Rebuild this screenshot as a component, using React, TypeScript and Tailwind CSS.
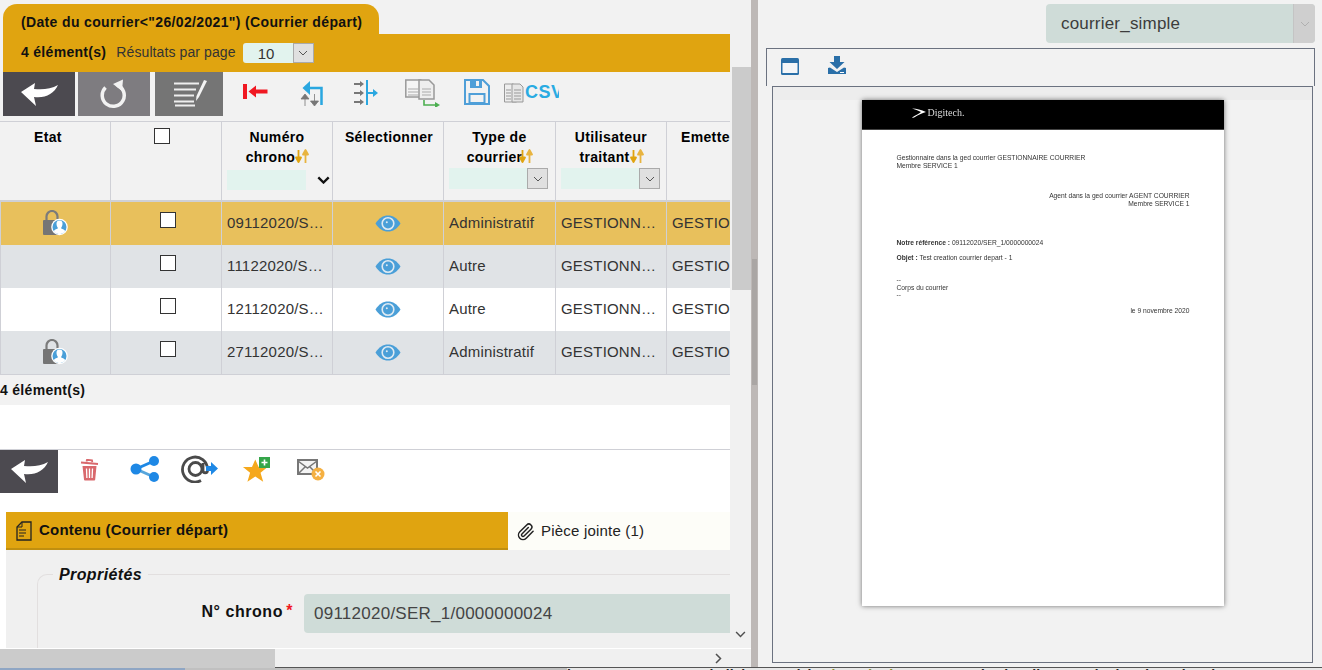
import React from "react";

const SortIcon = ({ className = "" }: { className?: string }) => (
  <svg width="14" height="15" viewBox="0 0 14 15" className={`inline-block align-[-2px] ${className}`}>
    <path d="M3.500 1v9M1 8.500l2.500 4.500L6 8.500z" fill="#e0a410" stroke="#e0a410" strokeWidth="1.800" strokeLinejoin="round" />
    <path d="M10.500 14V4M8 5.500 10.500 1 13 5.500z" fill="#e8b440" stroke="#e8b440" strokeWidth="1.800" strokeLinejoin="round" />
  </svg>
);

const Chevron = ({ color = "#555", w = 10, sw = 1 }: { color?: string; w?: number; sw?: number }) => (
  <svg width={w} height={w * 0.6} viewBox="0 0 10 6">
    <path d="M1 1l4 4 4-4" fill="none" stroke={color} strokeWidth={sw} />
  </svg>
);

const BackArrow = () => (
  <svg width="37" height="23" viewBox="0 0 37 23">
    <path d="M0 9 14 0 13 6C22 7 30 6 37 2 33 11 24 15.500 13 14L15 23Z" fill="#fff" />
  </svg>
);

const Lock = () => (
  <svg width="25" height="26" viewBox="0 0 25 26">
    <path d="M3.500 12V6.500a5.500 5.500 0 0 1 11 0V12" fill="none" stroke="#7b7b7b" strokeWidth="2.200" />
    <rect x="0" y="10" width="18" height="15" rx="1" fill="#757575" />
    <circle cx="16.500" cy="17" r="8.300" fill="#fff" />
    <circle cx="16.500" cy="17" r="7" fill="#4a9fd8" />
    <path d="M13.500 13.500a3 3 0 0 1 6 0c0 2-.7 3.500-1.300 4.200v.8c1.500.5 3.500 1 4 2.700a7 7 0 0 1-11.400 0c.5-1.700 2.500-2.200 4-2.700v-.8c-.6-.7-1.300-2.200-1.300-4.200z" fill="#fff" />
  </svg>
);

const Eye = () => (
  <svg width="26" height="17" viewBox="0 0 26 17">
    <path d="M0.500 8.500C4 3 8 .5 13 .5s9 2.500 12.500 8C22 14 18 16.500 13 16.500S4 14 .5 8.500z" fill="#4a9fd8" />
    <circle cx="13" cy="8.500" r="5.800" fill="none" stroke="#dfeaf2" strokeWidth="1.600" />
    <circle cx="13" cy="8.500" r="2.800" fill="#4a9fd8" />
    <circle cx="11.800" cy="7.300" r="1" fill="#dfeaf2" />
  </svg>
);

const Check = () => <div className="w-[16px] h-[16px] bg-white border border-[#333]" />;

const rows = [
  { bg: "bg-[#e8c05c]", lock: true, chrono: "09112020/S…", type: "Administratif" },
  { bg: "bg-[#e0e3e6]", lock: false, chrono: "11122020/S…", type: "Autre" },
  { bg: "bg-white", lock: false, chrono: "12112020/S…", type: "Autre" },
  { bg: "bg-[#e0e3e6]", lock: true, chrono: "27112020/S…", type: "Administratif" },
];

const gridCols = "grid grid-cols-[110px_111px_111px_111px_112px_111px_64px]";
const rowCols = "grid grid-cols-[109px_111px_111px_111px_112px_111px_64px]";
const cellBorder = "border-l border-[#cfd0d6]";

const FilterSelect = () => (
  <div className="flex h-[21px] mt-[1px] ml-[5px]">
    <div className="w-[78px] bg-[#e2f3ee]" />
    <div className="w-[21px] h-[21px] bg-[#e0e0e0] border border-[#aaa] flex items-center justify-center">
      <Chevron />
    </div>
  </div>
);

export default function App() {
  return (
    <div className="w-[1322px] h-[670px] overflow-hidden bg-[#f2f2f2] font-['Liberation_Sans',Arial,sans-serif] text-black">
      <div className="flex h-[667px]">
        {/* Left pane */}
        <div className="w-[751px] flex flex-col">
          <div className="flex h-[648px]">
            <div className="w-[730px] h-[648px] overflow-hidden flex flex-col">
              {/* Title tab */}
              <div className="pt-[4px] pl-[3px] shrink-0">
                <div className="w-[376px] h-[30px] bg-[#e0a410] rounded-t-[14px] pl-[18px] pt-[9px] text-[14px] leading-[18px] font-bold tracking-[0.35px] text-[#111] whitespace-nowrap">
                  (Date du courrier&lt;"26/02/2021") (Courrier départ)
                </div>
              </div>
              <div className="ml-[3px] h-[38px] shrink-0 bg-[#e0a410] flex items-center pl-[18px] pb-[1px]">
                <span className="text-[14px] font-bold tracking-[0.3px] text-[#111]">4 élément(s)</span>
                <span className="ml-[10px] text-[14px] text-[#333] tracking-[0.1px]">Résultats par page</span>
                <div className="ml-[7px] flex h-[20px] mt-[1px]">
                  <div className="w-[50px] bg-[#e2f3ee] rounded-l-[3px] pl-[15px] text-[15px] leading-[22px] text-[#333]">10</div>
                  <div className="w-[21px] bg-[#e0e0e0] border border-[#aaa] flex items-center justify-center">
                    <Chevron />
                  </div>
                </div>
              </div>
              {/* Toolbar */}
              <div className="h-[44px] flex items-start shrink-0">
                <div className="ml-[3px] w-[72px] h-[44px] bg-[#4c4a50] flex items-center justify-center">
                  <BackArrow />
                </div>
                <div className="ml-[3px] w-[72px] h-[44px] bg-[#7e7c80] flex items-center justify-center">
                  <svg width="30" height="30" viewBox="0 0 30 30">
                    <path d="M6.500 8.500A11 11 0 1 0 18 6" fill="none" stroke="#f2f2f2" strokeWidth="3.500" />
                    <path d="M14 5 24 0.500 23 12Z" fill="#f2f2f2" />
                  </svg>
                </div>
                <div className="ml-[5px] w-[68px] h-[44px] bg-[#757575] flex items-center justify-center pl-[4px]">
                  <svg width="36" height="28" viewBox="0 0 36 28">
                    <path d="M1 3.500h25M1 9.500h22M1 15.500h20M1 21.500h20M2 25.500h20" fill="none" stroke="#eee" strokeWidth="2.200" />
                    <path d="M34 1 26 17l-3 4 .5-5L31 0z" fill="#f4f4f4" />
                  </svg>
                </div>
                <svg width="25" height="16" viewBox="0 0 25 16" className="ml-[20px] mt-[12px]">
                  <rect x="0" y="0" width="4" height="15" fill="#f01822" />
                  <path d="M5.500 7.500 13 1.500v4h11.500v4H13v4z" fill="#f01822" />
                </svg>
                <svg width="23" height="26" viewBox="0 0 23 26" className="ml-[32px] mt-[8px]">
                  <path d="M21.500 25V8H7" fill="none" stroke="#2aa7e0" strokeWidth="2.500" />
                  <path d="M10 1v14L2.500 8z" fill="#2aa7e0" />
                  <path d="M5 26V16M1 19l4-5 4 5z" fill="#777" stroke="#777" strokeWidth=".8" />
                  <path d="M14.500 14v10M10.500 21l4 5 4-5z" fill="#777" stroke="#777" strokeWidth=".8" />
                </svg>
                <svg width="24" height="26" viewBox="0 0 24 26" className="ml-[31px] mt-[8px]">
                  <path d="M0 4h7M0 13h7M0 22h7" stroke="#777" strokeWidth="2" />
                  <path d="M6 1l4 3-4 3zM6 10l4 3-4 3zM6 19l4 3-4 3z" fill="#777" />
                  <path d="M13 0v25" stroke="#2aa7e0" strokeWidth="2" />
                  <path d="M13 13h7" stroke="#2aa7e0" strokeWidth="2" />
                  <path d="M19 9l5 4-5 4z" fill="#2aa7e0" />
                </svg>
                <svg width="35" height="28" viewBox="0 0 35 28" className="ml-[27px] mt-[7px]">
                  <path d="M.8 1h15l5 4v13H.8z" fill="#f4f4f4" stroke="#999" strokeWidth="1.500" />
                  <path d="M14 1h10l5 5v14H14z" fill="#eee" stroke="#999" strokeWidth="1.500" />
                  <path d="M3 10h11M3 13h11M3 16h11M17 10h9M17 13h9M17 16h9" stroke="#aaa" strokeWidth="1" />
                  <path d="M19 21v5h12" fill="none" stroke="#4caf50" strokeWidth="1.600" />
                  <path d="M30 23l5 3-5 3z" fill="#4caf50" />
                </svg>
                <svg width="26" height="26" viewBox="0 0 26 26" className="ml-[24px] mt-[7px]">
                  <path d="M1 1h18l6 6v18H1z" fill="none" stroke="#4f9fd8" strokeWidth="2" />
                  <path d="M6 1h12v8H6z" fill="#4f9fd8" />
                  <rect x="12" y="2" width="3" height="5" fill="#f2f2f2" />
                  <rect x="5.500" y="15" width="15" height="9" fill="none" stroke="#4f9fd8" strokeWidth="2" />
                </svg>
                <div className="ml-[14px] mt-[10px] w-[55px] h-[21px] overflow-hidden flex items-center">
                  <svg width="20" height="20" viewBox="0 0 20 20" className="shrink-0">
                    <path d="M.5 1h9l3 3v15H.5z" fill="#eee" stroke="#999" />
                    <path d="M8 1h8l3 3v15H8z" fill="#e6e6e6" stroke="#999" />
                    <path d="M2 7h5M2 10h5M2 13h5M2 16h5M10 7h7M10 10h7M10 13h7M10 16h7" stroke="#999" />
                  </svg>
                  <span className="text-[18px] font-bold text-[#29abe2] leading-[21px] tracking-[0.5px] ml-[1px]">CSV</span>
                </div>
              </div>

              {/* Table */}
              <div className="mt-[5px] h-[253px] shrink-0 overflow-hidden border-t border-[#cfd0d6]">
                <div className={`${gridCols} w-[730px] h-[80px] border-b-2 border-[#cfd0d6] text-[14px] leading-[20px] font-bold tracking-[0.35px]`}>
                  <div className="pl-[34px] pt-[5px]">Etat</div>
                  <div className={`${cellBorder} pl-[43px] pt-[6px]`}>
                    <Check />
                  </div>
                  <div className={`${cellBorder} pt-[5px] text-center relative`}>
                    <div>Numéro</div>
                    <div className="pl-[1px]">chrono<SortIcon /></div>
                    <div className="flex items-center mt-[3px] ml-[5px]">
                      <div className="w-[79px] h-[20px] bg-[#e2f3ee]" />
                      <span className="ml-[11px]"><Chevron color="#111" w={13} sw={1.800} /></span>
                    </div>
                  </div>
                  <div className={`${cellBorder} pt-[5px] pl-[2px] text-center`}>Sélectionner</div>
                  <div className={`${cellBorder} pt-[5px] text-center`}>
                    <div>Type de</div>
                    <div className="pl-[1px]">courrier<SortIcon className="-ml-[3px]" /></div>
                    <FilterSelect />
                  </div>
                  <div className={`${cellBorder} pt-[5px] text-center`}>
                    <div>Utilisateur</div>
                    <div className="pl-[1px]">traitant<SortIcon /></div>
                    <FilterSelect />
                  </div>
                  <div className={`${cellBorder} pt-[5px] pl-[14px] whitespace-nowrap overflow-hidden`}>Emetteur</div>
                </div>
                {rows.map((r) => (
                  <div key={r.chrono} className={`${rowCols} w-[730px] h-[43px] ${r.bg} border-l border-[#cfd0d6] text-[15px] tracking-[0.2px] text-[#333]`}>
                    <div className="pl-[42px] pt-[8px]">{r.lock && <Lock />}</div>
                    <div className={`${cellBorder} pl-[49px] pt-[10px]`}>
                      <Check />
                    </div>
                    <div className={`${cellBorder} pl-[5px] flex items-center`}>{r.chrono}</div>
                    <div className={`${cellBorder} flex items-center justify-center`}>
                      <Eye />
                    </div>
                    <div className={`${cellBorder} pl-[5px] flex items-center`}>{r.type}</div>
                    <div className={`${cellBorder} pl-[5px] flex items-center`}>GESTIONN…</div>
                    <div className={`${cellBorder} pl-[5px] flex items-center overflow-hidden whitespace-nowrap`}>GESTIONN…</div>
                  </div>
                ))}
              </div>
              <div className="h-[31px] shrink-0 border-t border-[#cfd0d6] flex items-center text-[14px] font-bold tracking-[0.3px] text-[#111]">
                4 élément(s)
              </div>

              {/* Lower white area */}
              <div className="bg-white flex-1 flex flex-col pt-[44px]">
                <div className="h-[44px] border-t border-[#cfd0d6] flex items-start shrink-0">
                  <div className="w-[58px] h-[43px] bg-[#4c4a50] flex items-center justify-center">
                    <BackArrow />
                  </div>
                  <svg width="19" height="22" viewBox="0 0 19 22" className="ml-[22px] mt-[9px]">
                    <path d="M1 3.500 18 5M6.500 2.500 7 .8 12 1.300l.3 1.800" fill="none" stroke="#d9686c" strokeWidth="1.800" />
                    <path d="M2.500 7h14l-1.300 13.500a1 1 0 0 1-1 1H5a1 1 0 0 1-1-1z" fill="#d9686c" />
                    <path d="M6.500 9.500l.4 9.500M9.500 9.500V19M12.500 9.500l-.4 9.500" stroke="#fff" strokeWidth="1.300" />
                  </svg>
                  <svg width="30" height="26" viewBox="0 0 30 26" className="ml-[31px] mt-[6px]">
                    <path d="M24 5 6 13" stroke="#1e88e5" strokeWidth="3" />
                    <path d="M6 13l18 8" stroke="#58a6dc" strokeWidth="3" />
                    <circle cx="24" cy="5" r="5" fill="#1e88e5" />
                    <circle cx="24" cy="21" r="5" fill="#1e88e5" />
                    <circle cx="6" cy="13" r="5.500" fill="#1e88e5" />
                  </svg>
                  <svg width="38" height="28" viewBox="0 0 38 28" className="ml-[21px] mt-[5px]">
                    <path d="M20 25.500A12.500 12.500 0 1 1 26.500 14v1.500c0 3-4.500 3-4.500 0V8M21 14a6.500 6.500 0 1 1-13 0 6.500 6.500 0 0 1 13 0z" fill="none" stroke="#4a4a4a" strokeWidth="2.800" />
                    <path d="M25 11h5V7l7 6.500-7 6.500v-4h-5z" fill="#1e88e5" />
                  </svg>
                  <svg width="29" height="26" viewBox="0 0 29 26" className="ml-[23px] mt-[7px]">
                    <path d="M14 1.500l3.500 8H27l-7.500 6 2.800 9.500L14 19.500 5.700 25l2.800-9.500L1 9.500h9.500z" fill="#f5a81c" transform="translate(0 1) scale(.95)" />
                    <rect x="17" y="0" width="11" height="11" fill="#35a64a" />
                    <path d="M22.500 2.500v6M19.500 5.500h6" stroke="#fff" strokeWidth="1.600" />
                  </svg>
                  <svg width="28" height="22" viewBox="0 0 28 22" className="ml-[26px] mt-[9px]">
                    <rect x="1" y="1" width="19" height="14" fill="#f4f4f4" stroke="#777" strokeWidth="2" />
                    <path d="M1 2l9.500 7L20 2M1 15l7-7M20 15l-7-7" fill="none" stroke="#777" strokeWidth="1.500" />
                    <circle cx="21" cy="15" r="6.500" fill="#f5b041" />
                    <path d="M18.500 12.500l5 5M23.500 12.500l-5 5" stroke="#fff" strokeWidth="1.600" />
                  </svg>
                </div>

                {/* Tabs */}
                <div className="mt-[19px] ml-[6px] flex h-[38px] shrink-0">
                  <div className="w-[502px] bg-[#e0a410] border-b-2 border-[#c08f10] flex items-center pl-[10px] pt-[1px] text-[15px] tracking-[0.2px] font-bold text-[#111]">
                    <svg width="16" height="20" viewBox="0 0 16 20" className="mr-[7px]">
                      <path d="M6 1h9v18H1V6z" fill="none" stroke="#222" strokeWidth="1.300" />
                      <path d="M6 1v5H1" fill="none" stroke="#222" strokeWidth="1" />
                      <path d="M3 9h7M3 12h7M3 15h5" stroke="#222" strokeWidth="1.200" />
                    </svg>
                    Contenu (Courrier départ)
                  </div>
                  <div className="flex-1 bg-[#fdfdf8] flex items-center pl-[9px] pt-[1px] text-[15px] tracking-[0.2px] text-[#222]">
                    <svg width="18" height="20" viewBox="0 0 24 24" fill="none" stroke="#222" strokeWidth="2" strokeLinecap="round" strokeLinejoin="round" className="mr-[6px]">
                      <path d="M21.440 11.050l-9.190 9.190a6 6 0 0 1-8.490-8.490l9.190-9.190a4 4 0 0 1 5.660 5.660l-9.200 9.190a2 2 0 0 1-2.830-2.830l8.490-8.480" />
                    </svg>
                    Pièce jointe (1)
                  </div>
                </div>

                {/* Content */}
                <div className="ml-[6px] flex-1 bg-[#f0f0f0] pt-[24px] pl-[31px] overflow-hidden">
                  <div className="relative border-t border-l border-[#e2dfdf] rounded-tl-[10px] h-[100px]">
                    <div className="absolute -top-[10px] left-[15px] px-[6px] bg-[#f0f0f0] text-[16px] tracking-[0.4px] leading-[20px] font-bold italic text-[#111]">Propriétés</div>
                    <div className="flex items-start pt-[19px]">
                      <div className="w-[266px] pt-[8px] text-right text-[16px] tracking-[0.55px] leading-[20px] font-bold text-[#111] pr-[21px] relative">
                        N° chrono<span className="absolute right-[11px] top-[7px] text-[#f01822] font-bold text-[16px]">*</span>
                      </div>
                      <div className="w-[426px] h-[39px] bg-[#cfdcd8] rounded-l-[4px] pl-[10px] flex items-center text-[17px] tracking-[0.25px] text-[#444]">09112020/SER_1/0000000024</div>
                    </div>
                  </div>
                </div>
              </div>
            </div>

            {/* Vertical scrollbar */}
            <div className="w-[21px] h-[648px] bg-[#f1f1f1] flex flex-col items-center">
              <div className="mt-[67px] ml-[1px] w-[19px] h-[223px] bg-[#cbcbcb]" />
              <div className="mt-[341px] flex justify-center">
                <Chevron color="#505050" w={11} sw={1.300} />
              </div>
            </div>
          </div>
          {/* Horizontal scrollbar */}
          <div className="h-[19px] border-t border-white bg-[#f0f0f0] flex items-center justify-between pr-[29px]">
            <div className="w-[275px] h-[19px] bg-[#cbcbcb]" />
            <svg width="7" height="11" viewBox="0 0 7 11">
              <path d="M1 1l4.500 4.500L1 10" fill="none" stroke="#505050" strokeWidth="1.500" />
            </svg>
          </div>
        </div>

        {/* Splitter */}
        <div className="w-[7px] h-[667px] bg-[#bdb8b6] pt-[259px] px-[1px]">
          <div className="h-[126px] bg-[#aaa6a4]" />
        </div>

        {/* Right pane */}
        <div className="flex-1 flex flex-col items-end pr-[7px]">
          <div className="mt-[4px] w-[269px] h-[39px] bg-[#cfdcd8] rounded-[4px] flex overflow-hidden shrink-0">
            <div className="flex-1 pl-[15px] flex items-center text-[17px] tracking-[0.2px] text-[#3c3c3c]">courrier_simple</div>
            <div className="w-[22px] bg-[#cfcfcf] border-l border-[#c4c4c4] flex items-center justify-center">
              <Chevron color="#b0b0b0" />
            </div>
          </div>
          <div className="mt-[5px] w-[549px] h-[38px] border-t border-x border-[#6b7280] flex items-start shrink-0">
            <svg width="18" height="17" viewBox="0 0 18 17" className="ml-[14px] mt-[9px]">
              <rect x="0" y="0" width="18" height="17" rx="1.500" fill="#2a6fa8" />
              <rect x="1.500" y="5" width="15" height="10" fill="#f4f6f8" />
            </svg>
            <svg width="18" height="20" viewBox="0 0 18 20" className="ml-[29px] mt-[7px]">
              <path d="M6 0h6v6h4.500L9 13 1.500 6H6z" fill="#2a6fa8" />
              <path d="M0 12l2-.5L9 16l7-4.500 2 .5v6H0z" fill="#2a6fa8" />
              <rect x="12" y="16" width="4" height="1" fill="#fff" />
            </svg>
          </div>
          <div className="mr-[2px] w-[541px] h-[577px] border border-[#6b7280] overflow-hidden shrink-0">
            <div className="h-[13px] bg-[#ededed]" />
            <div className="mx-auto w-[362px] h-[506px] bg-white shadow-[0_0_5px_rgba(0,0,0,0.55)] text-[6.7px] leading-[7.5px] text-[#333] blur-[0.2px]">
              <div className="h-[30px] bg-black border-b border-[#444] pl-[49px] flex items-center pb-[4px]">
                <svg width="16" height="12" viewBox="0 0 16 12">
                  <path d="M1 1.500c5 0 9 1.500 14 3.500C11 6 7 8 4 10c-1 .8-2 1-3 .5C5 8 8 6.500 10 5 7 3.500 4 2.500 1 1.500z" fill="#fff" />
                </svg>
                <span className="font-['Liberation_Serif',serif] text-[10px] leading-[12px] text-[#ddd] ml-[1px]">Digitech.</span>
              </div>
              <div className="pl-[35px] pr-[34px]">
                <div className="pt-[24px]">
                  <div>Gestionnaire dans la ged courrier GESTIONNAIRE COURRIER</div>
                  <div>Membre SERVICE 1</div>
                </div>
                <div className="pt-[23px] text-right">
                  <div>Agent dans la ged courrier AGENT COURRIER</div>
                  <div>Membre SERVICE 1</div>
                </div>
                <div className="pt-[32px]">
                  <b>Notre référence :</b> 09112020/SER_1/0000000024
                </div>
                <div className="pt-[7px]">
                  <b>Objet :</b> Test creation courrier depart - 1
                </div>
                <div className="pt-[15px]">--</div>
                <div>Corps du courrier</div>
                <div>--</div>
                <div className="pt-[8px] text-right">le 9 novembre 2020</div>
              </div>
            </div>
          </div>
        </div>
      </div>

      {/* Bottom sliver */}
      <div className="h-[3px] border-t border-[#555] flex overflow-hidden bg-[#c8c8c8]">
        <div className="w-[185px] bg-[#8fa6c4]" />
        <div className="w-[382px] bg-[#c0c0c0]" />
        <div className="flex-1 bg-[#e8e8e8] text-[14px] leading-[14px] whitespace-nowrap text-[#222] font-bold">
          la page <span className="text-[#8a8f30]">Ouvertures</span>, similairement à la <span className="text-[#8a8f30]">Liste résultats</span>, permet de visualiser un résultat de recherche
        </div>
      </div>
    </div>
  );
}
